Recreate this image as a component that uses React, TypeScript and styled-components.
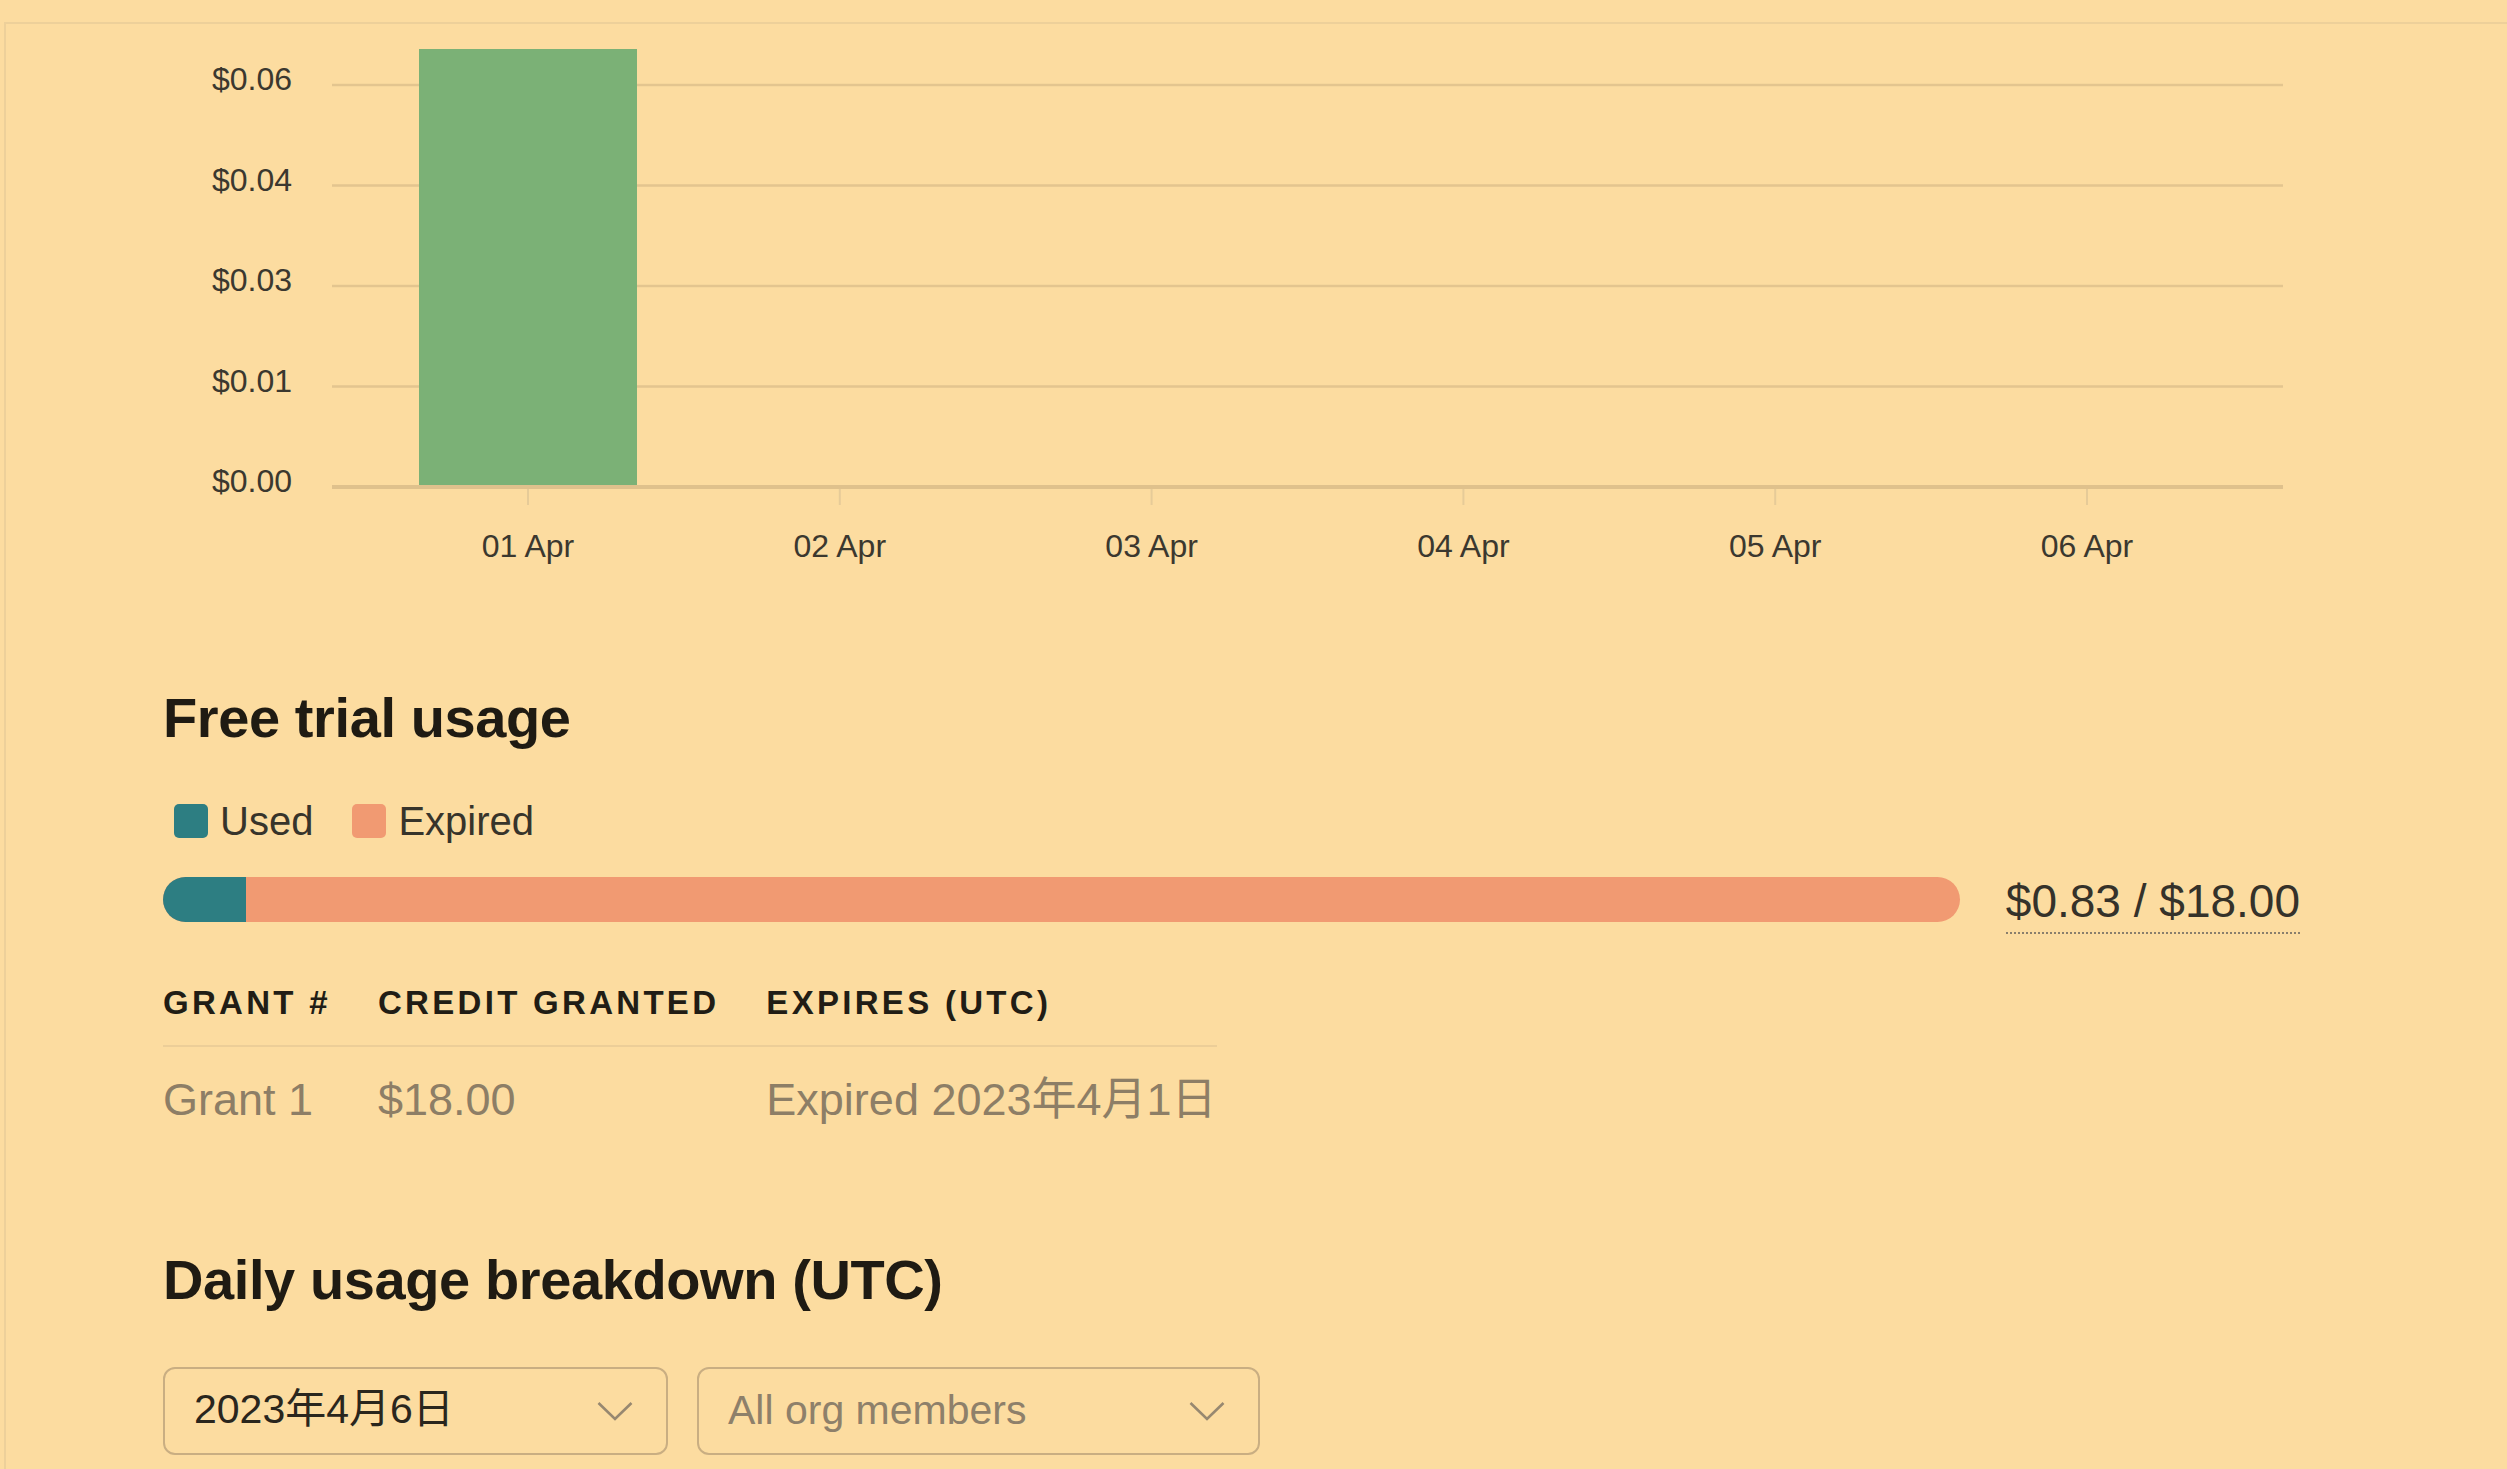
import React from 'react';
import styled, { createGlobalStyle } from 'styled-components';

const GlobalStyle = createGlobalStyle`
  html, body {
    margin: 0;
    padding: 0;
    background: #fcdca0;
  }
  body {
    font-family: 'Liberation Sans', Arial, 'Noto Sans CJK JP', sans-serif;
    color: #35322a;
  }
`;

const SANS = `'Liberation Sans', Arial, 'Noto Sans CJK JP', sans-serif`;

const Page = styled.div`
  padding: 22px 0 0 4px;
  min-height: 100vh;
  box-sizing: border-box;
`;

const Panel = styled.div`
  border-top: 2px solid #edd09a;
  border-left: 2px solid #edd09a;
  min-height: calc(100vh - 22px);
  box-sizing: border-box;
  padding-left: 157px;
`;

const ChartSvg = styled.svg`
  display: block;
  overflow: visible;

  text {
    font-family: ${SANS};
    fill: #3b382f;
  }
`;

const SectionTitle = styled.h2<{ $gap: number }>`
  margin: ${({ $gap }) => $gap}px 0 0;
  font-family: ${SANS};
  font-weight: 700;
  font-size: 56px;
  line-height: 64px;
  color: #1f1b13;
  letter-spacing: -0.4px;
`;

const Legend = styled.div`
  display: flex;
  align-items: center;
  gap: 39px;
  margin-top: 47px;
  padding-left: 11px;
`;

const LegendItem = styled.div`
  display: flex;
  align-items: center;
  gap: 12px;
  font-size: 40px;
  line-height: 48px;
  color: #37342b;
`;

const Swatch = styled.span<{ $color: string }>`
  width: 34px;
  height: 34px;
  border-radius: 5px;
  background: ${({ $color }) => $color};
`;

const UsageRow = styled.div`
  display: flex;
  align-items: flex-start;
  gap: 46px;
  margin-top: 32px;
  width: 2137px;
`;

const Track = styled.div`
  flex: 1;
  height: 45px;
  border-radius: 23px;
  overflow: hidden;
  display: flex;
  background: #f19a72;
`;

const Fill = styled.div<{ $color: string }>`
  height: 100%;
  background: ${({ $color }) => $color};
`;

const Amount = styled.span`
  font-size: 46px;
  line-height: 48px;
  padding-bottom: 7px;
  border-bottom: 2px dotted #8a7f6c;
  color: #35322a;
  white-space: nowrap;
`;

const GrantTable = styled.table`
  margin-top: 49px;
  border-collapse: collapse;
`;

const HeadCell = styled.th<{ $last?: boolean }>`
  text-align: left;
  font-size: 33px;
  line-height: 40px;
  font-weight: 700;
  letter-spacing: 3.3px;
  text-transform: uppercase;
  color: #211d15;
  padding: 0 ${({ $last }) => ($last ? 0 : 47)}px 22px 0;
  border-bottom: 2px solid #ecce98;
  white-space: nowrap;
`;

const BodyCell = styled.td<{ $last?: boolean }>`
  font-size: 45px;
  line-height: 54px;
  color: #8d7e66;
  padding: 26px ${({ $last }) => ($last ? 0 : 47)}px 0 0;
  white-space: nowrap;
`;

const Filters = styled.div`
  display: flex;
  gap: 29px;
  margin-top: 55px;
`;

const SelectBox = styled.div<{ $width: number; $muted?: boolean }>`
  width: ${({ $width }) => $width}px;
  height: 88px;
  box-sizing: border-box;
  border: 2px solid #c9ae82;
  border-radius: 12px;
  padding: 0 33px 0 29px;
  display: flex;
  align-items: center;
  justify-content: space-between;
  font-size: 41px;
  color: ${({ $muted }) => ($muted ? '#8e806a' : '#2a261d')};
`;

const SelectLabel = styled.span<{ $shift?: number }>`
  display: block;
  line-height: 48px;
  margin-top: ${({ $shift }) => $shift ?? 0}px;
`;

const Chevron = () => (
  <svg width="36" height="20" viewBox="0 0 36 20" fill="none">
    <polyline points="1.5,2 18,18 34.5,2" stroke="#978870" strokeWidth="2.6" />
  </svg>
);

const yTicks = ['$0.00', '$0.01', '$0.03', '$0.04', '$0.06'];
const days = ['01 Apr', '02 Apr', '03 Apr', '04 Apr', '05 Apr', '06 Apr'];
const costs = [0.063, 0, 0, 0, 0, 0];

const PLOT_LEFT = 169;
const PLOT_RIGHT = 2120;
const BASE_Y = 463;
const ROW_H = 100.5;
const DAY_W = 311.8;
const FIRST_DAY = 365;
const BAR_W = 218;
const TOP_VALUE = 0.063;

const UsageChart = () => (
  <ChartSvg width={2140} height={545}>
    {yTicks.map((label, i) => {
      const y = BASE_Y - i * ROW_H;
      return (
        <g key={label}>
          <line
            x1={PLOT_LEFT}
            x2={PLOT_RIGHT}
            y1={y}
            y2={y}
            stroke={i === 0 ? '#dfc18c' : '#e3c58f'}
            strokeWidth={i === 0 ? 4 : 2.5}
          />
          <text x={129} y={y + 5} textAnchor="end" fontSize={32}>
            {label}
          </text>
        </g>
      );
    })}
    {days.map((day, i) => {
      const x = FIRST_DAY + i * DAY_W;
      const h = (costs[i] / TOP_VALUE) * (BASE_Y - 2 - 25);
      return (
        <g key={day}>
          {h > 0 && (
            <rect x={x - BAR_W / 2} y={BASE_Y - 2 - h} width={BAR_W} height={h} fill="#7bb176" />
          )}
          <line x1={x} x2={x} y1={465} y2={481} stroke="#e6cb98" strokeWidth={2} />
          <text x={x} y={533} textAnchor="middle" fontSize={32}>
            {day}
          </text>
        </g>
      );
    })}
  </ChartSvg>
);

const used = 0.83;
const total = 18;

const App = () => (
  <Page>
    <GlobalStyle />
    <Panel>
      <UsageChart />

      <SectionTitle $gap={117}>Free trial usage</SectionTitle>
      <Legend>
        <LegendItem>
          <Swatch $color="#2d7e82" />
          Used
        </LegendItem>
        <LegendItem>
          <Swatch $color="#f19a72" />
          Expired
        </LegendItem>
      </Legend>
      <UsageRow>
        <Track>
          <Fill $color="#2d7e82" style={{ width: `${(used / total) * 100}%` }} />
        </Track>
        <Amount>$0.83 / $18.00</Amount>
      </UsageRow>

      <GrantTable>
        <thead>
          <tr>
            <HeadCell>Grant #</HeadCell>
            <HeadCell>Credit granted</HeadCell>
            <HeadCell $last>Expires (UTC)</HeadCell>
          </tr>
        </thead>
        <tbody>
          <tr>
            <BodyCell>Grant 1</BodyCell>
            <BodyCell>$18.00</BodyCell>
            <BodyCell $last>Expired 2023年4月1日</BodyCell>
          </tr>
        </tbody>
      </GrantTable>

      <SectionTitle $gap={121}>Daily usage breakdown (UTC)</SectionTitle>
      <Filters>
        <SelectBox $width={505}>
          <SelectLabel $shift={-4}>2023年4月6日</SelectLabel>
          <Chevron />
        </SelectBox>
        <SelectBox $width={563} $muted>
          <SelectLabel $shift={-2}>All org members</SelectLabel>
          <Chevron />
        </SelectBox>
      </Filters>
    </Panel>
  </Page>
);

export default App;
